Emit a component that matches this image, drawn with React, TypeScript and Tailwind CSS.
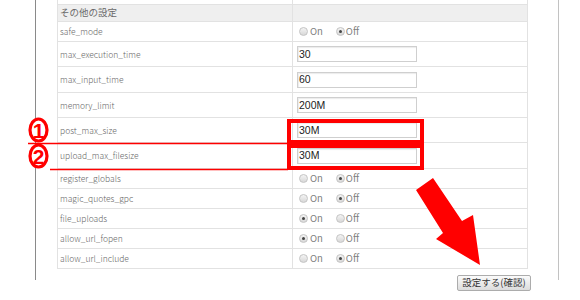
import React from "react";

type Row =
  | { kind: "input"; label: string; value: string; h: string }
  | { kind: "radio"; label: string; on: boolean };

const rows: Row[] = [
  { kind: "radio", label: "safe_mode", on: false },
  { kind: "input", label: "max_execution_time", value: "30", h: "h-[25px]" },
  { kind: "input", label: "max_input_time", value: "60", h: "h-[26px]" },
  { kind: "input", label: "memory_limit", value: "200M", h: "h-[25px]" },
  { kind: "input", label: "post_max_size", value: "30M", h: "h-[25px]" },
  { kind: "input", label: "upload_max_filesize", value: "30M", h: "h-[26px]" },
  { kind: "radio", label: "register_globals", on: false },
  { kind: "radio", label: "magic_quotes_gpc", on: false },
  { kind: "radio", label: "file_uploads", on: true },
  { kind: "radio", label: "allow_url_fopen", on: true },
  { kind: "radio", label: "allow_url_include", on: false },
];

function Radio({ checked }: { checked: boolean }) {
  return (
    <span className="w-[9px] h-[9px] rounded-full border border-[#c4c4c4] bg-gradient-to-b from-[#f4f4f4] to-[#d8d8d8] flex items-center justify-center shrink-0">
      {checked && <span className="w-[3px] h-[3px] rounded-full bg-[#444]" />}
    </span>
  );
}

function TextBox({ value }: { value: string }) {
  return (
    <div className="ml-[4px] w-[120px] h-[16px] border border-[#cfcfcf] shadow-[inset_1px_1px_1px_rgba(0,0,0,0.08)] bg-white flex items-center pl-[1px] text-[10.5px] text-[#222] leading-none font-['Liberation_Sans',sans-serif]">
      {value}
    </div>
  );
}

export default function App() {
  return (
    <div className="relative w-[580px] h-[300px] overflow-hidden bg-white font-['Noto_Sans_CJK_JP','Noto_Sans',sans-serif]">
      <div className="ml-[35px] w-[524px] h-[300px] border-l border-l-[#8a8a8a] border-r border-r-[#c2c2c2] pl-[21px]">
        <div className="mt-[-20px] w-[471px] border-l border-r border-[#e2e2e2] text-[#777]">
          {/* partially visible previous row */}
          <div className="flex h-[25px] border-b border-[#e2e2e2]">
            <div className="w-[235px] border-r border-[#e2e2e2]" />
            <div className="flex-1 flex items-center">
              <TextBox value="" />
            </div>
          </div>
          {/* section header */}
          <div className="flex h-[17px] border-b border-[#e2e2e2] bg-[#efefef]">
            <div className="w-[235px] border-r border-[#e2e2e2] flex items-center pl-[2px] text-[9.5px] leading-none text-[#6a6a6a]">
              その他の設定
            </div>
            <div className="flex-1" />
          </div>
          {rows.map((r) => (
            <div
              key={r.label}
              className={`flex border-b border-[#e2e2e2] ${r.kind === "input" ? r.h : "h-[20px]"}`}
            >
              <div className="w-[235px] border-r border-[#e2e2e2] flex items-center pl-[2px] text-[8.5px] leading-none font-light text-[#666]">
                {r.label}
              </div>
              <div className="flex-1 flex items-center">
                {r.kind === "input" ? (
                  <TextBox value={r.value} />
                ) : (
                  <div className="ml-[6px] flex items-center text-[9.5px] leading-none text-[#808080]">
                    <Radio checked={r.on} />
                    <span className="ml-[2px]">On</span>
                    <span className="ml-[13px]" />
                    <Radio checked={!r.on} />
                    <span className="ml-[1px]">Off</span>
                  </div>
                )}
              </div>
            </div>
          ))}
        </div>
        <div className="w-[474px] flex justify-end mt-[6px]">
          <button className="h-[16px] w-[74px] border border-[#acacac] rounded-[2px] bg-gradient-to-b from-[#fbfbfb] to-[#dcdcdc] text-[9.5px] leading-none text-[#333] flex items-center justify-center">
            設定する(確認)
          </button>
        </div>
      </div>

      {/* annotations */}
      <div className="absolute left-[287px] top-[119px] w-[137px] h-[25px] border-4 border-[#ff0000]" />
      <div className="absolute left-[287px] top-[144px] w-[137px] h-[26px] border-4 border-[#ff0000]" />
      <svg className="absolute left-0 top-0" width="580" height="300" viewBox="0 0 580 300">
        <line x1="28" y1="143.5" x2="288" y2="143.5" stroke="#ff0000" strokeWidth="1.5" />
        <line x1="50" y1="169.5" x2="288" y2="169.5" stroke="#ff0000" strokeWidth="1.5" />
        <ellipse cx="38.5" cy="130" rx="8.5" ry="11" fill="white" stroke="#ff0000" strokeWidth="3.2" />
        <text x="38.5" y="137.5" textAnchor="middle" fontSize="21" fontWeight="bold" fill="#ff0000" fontFamily="Liberation Sans, sans-serif">1</text>
        <ellipse cx="38.5" cy="156" rx="8.5" ry="11" fill="white" stroke="#ff0000" strokeWidth="3.2" />
        <text x="38.5" y="163.5" textAnchor="middle" fontSize="21" fontWeight="bold" fill="#ff0000" fontFamily="Liberation Sans, sans-serif">2</text>
        <polygon points="416,190 433,178 462,221 473,215 480,265 436,239 443,233" fill="#ff0000" />
      </svg>
    </div>
  );
}
